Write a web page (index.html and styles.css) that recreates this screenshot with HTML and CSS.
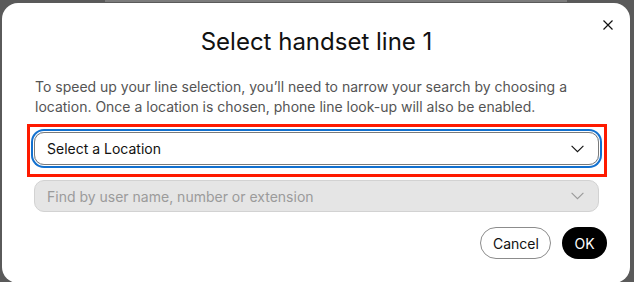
FILE: index.html
```html
<!DOCTYPE html>
<html lang="en">
<head>
<meta charset="utf-8">
<title>Select handset line 1</title>
<link rel="stylesheet" href="styles.css">
</head>
<body>
<div class="behind"></div>
<div class="dialog">
  <button class="close" aria-label="Close">
    <svg width="10" height="10" viewBox="0 0 10 10"><path d="M0.5 0.5L9.5 9.5M9.5 0.5L0.5 9.5" stroke="#111" stroke-width="1.2" fill="none"/></svg>
  </button>
  <h1 class="title">Select handset line 1</h1>
  <p class="intro">To speed up your line selection, you’ll need to narrow your search by choosing a location. Once a location is chosen, phone line look-up will also be enabled.</p>
  <div class="highlight">
    <div class="select focus">
      <span class="value">Select a Location</span>
      <svg class="chev" width="13" height="8" viewBox="0 0 13 8"><path d="M0.6 0.8L6.5 6.7L12.4 0.8" stroke="#111" stroke-width="1.1" fill="none"/></svg>
    </div>
  </div>
  <div class="select disabled">
    <span class="placeholder">Find by user name, number or extension</span>
    <svg class="chev" width="13" height="8" viewBox="0 0 13 8"><path d="M0.6 0.8L6.5 6.7L12.4 0.8" stroke="#9a9a9a" stroke-width="1.1" fill="none"/></svg>
  </div>
  <div class="footer">
    <button class="btn secondary">Cancel</button>
    <button class="btn primary">OK</button>
  </div>
</div>
</body>
</html>
```
FILE: styles.css
```css
html, body {
  margin: 0;
  padding: 0;
  height: 100%;
  overflow: hidden;
}
body {
  background: #5a5a5a;
  font-family: Inter, "Liberation Sans", sans-serif;
}
.behind {
  height: 2px;
  margin-left: 105px;
  width: 462px;
  background: #7c7c7c;
}
.dialog {
  position: relative;
  box-sizing: border-box;
  margin-top: 1px;
  margin-left: 2px;
  width: 628px;
  height: 280px;
  background: #fff;
  border-radius: 16px;
  padding: 23px 31px 0 32px;
}
.close {
  position: absolute;
  top: 16px;
  right: 16px;
  width: 12px;
  height: 12px;
  padding: 1px;
  border: 0;
  background: none;
  display: flex;
  align-items: center;
  justify-content: center;
}
.title {
  margin: 0;
  font-size: 24px;
  line-height: 32px;
  font-weight: 400;
  text-align: center;
  color: #111;
}
.intro {
  margin: 19px 0 0 1px;
  font-size: 14px;
  line-height: 20px;
  color: #545454;
}
.highlight {
  margin: 7px 0 0 -7px;
  width: 580px;
  box-sizing: border-box;
  border: 3px solid #fe1a00;
  padding: 5px 5px 9px 4px;
}
.select {
  box-sizing: border-box;
  width: 565px;
  height: 33px;
  border-radius: 10px;
  display: flex;
  align-items: center;
  justify-content: space-between;
  padding: 0 14px 0 12px;
  font-size: 14px;
}
.focus {
  border: 1px solid #7a7a7a;
  box-shadow: 0 0 0 1px #fff, 0 0 0 3px #1170cf;
  color: #111;
}
.disabled {
  margin-top: 3px;
  height: 32px;
  background: #e5e5e5;
  border: 1px solid #d2d2d2;
  color: #9b9b9b;
}
.footer {
  display: flex;
  justify-content: flex-end;
  gap: 11px;
  margin: 15px -8px 0 0;
}
.btn {
  height: 32px;
  border-radius: 16px;
  font-family: Inter, "Liberation Sans", sans-serif;
  font-size: 14px;
  font-weight: 400;
  padding: 0 12px;
  box-sizing: border-box;
}
.secondary {
  width: 71px;
  background: #fff;
  border: 1px solid #8c8c8c;
  color: #111;
}
.primary {
  width: 45px;
  background: #000;
  border: 0;
  color: #fff;
}
```
